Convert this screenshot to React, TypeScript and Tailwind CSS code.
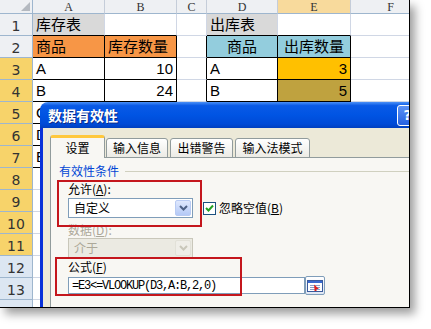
const COLS = ["A", "B", "C", "D", "E", "F"];
const ROWS = Array.from({ length: 14 }, (_, i) => i + 1);

type CellDef = { t?: string; bg?: string; align?: "left" | "right" | "center" };

const CELLS: Record<string, CellDef> = {
  A1: { t: "库存表", bg: "bg-[#d9d9d9]" },
  D1: { t: "出库表", bg: "bg-[#d9d9d9]" },
  A2: { t: "商品", bg: "bg-[#f79646]" },
  B2: { t: "库存数量", bg: "bg-[#f79646]" },
  D2: { t: "商品", bg: "bg-[#93cddd]", align: "center" },
  E2: { t: "出库数量", bg: "bg-[#93cddd]", align: "center" },
  A3: { t: "A" },
  B3: { t: "10", align: "right" },
  D3: { t: "A" },
  E3: { t: "3", align: "right", bg: "bg-[#ffc000]" },
  A4: { t: "B" },
  B4: { t: "24", align: "right" },
  D4: { t: "B" },
  E4: { t: "5", align: "right", bg: "bg-[#bfa23f]" },
  A5: { t: "C" },
  B5: { t: "18", align: "right" },
  A6: { t: "D" },
  B6: { t: "30", align: "right" },
  A7: { t: "E" },
  B7: { t: "12", align: "right" },
};

// black-bordered tables: A2:B7 and D2:E4
const inTable = (r: number, c: number) =>
  (c <= 1 && r >= 2 && r <= 7) || (c >= 3 && c <= 4 && r >= 2 && r <= 4);

function rowHeadBg(r: number) {
  if (r >= 3 && r <= 11) return "bg-[#f7d36a]";
  if (r >= 12) return "bg-[#dce6f2]";
  return "bg-[#eef0f3]";
}

function Sheet() {
  return (
    <div className="grid grid-cols-[33px_72px_72px_30px_71px_73px_80px] grid-rows-[14px_repeat(14,22px)]">
      {/* corner */}
      <div className="flex items-end justify-end border-r border-b border-[#9eb6ce] bg-[#eef0f3] p-[2px]">
        <svg width="9" height="9" viewBox="0 0 9 9">
          <path d="M9 0 L9 9 L0 9 Z" fill="#b4b9c0" />
        </svg>
      </div>
      {COLS.map((c) => (
        <div
          key={c}
          className={`flex items-center justify-center border-r border-b border-r-[#c5cdd9] border-b-[#9eb6ce] text-[12px] leading-none text-[#333] font-['Liberation_Serif',serif] ${
            c === "E" ? "bg-[#f8da9c]" : "bg-[#eef0f3]"
          }`}
        >
          {c}
        </div>
      ))}

      {ROWS.map((r) => (
        <Row key={r} r={r} />
      ))}
    </div>
  );
}

function Row({ r }: { r: number }) {
  return (
    <>
      <div
        className={`flex items-end justify-center pb-[1px] border-r border-b border-r-[#9eb6ce] border-b-[#9eb6ce] text-[14px] leading-[16px] text-[#333] font-['DejaVu_Sans',sans-serif] ${rowHeadBg(r)}`}
      >
        {r}
      </div>
      {COLS.map((col, c) => {
        const cell = CELLS[`${col}${r}`] ?? {};
        const right = inTable(r, c) || inTable(r, c + 1) ? "border-r-black" : "border-r-[#d0d7e5]";
        const bottom = inTable(r, c) || inTable(r + 1, c) ? "border-b-black" : "border-b-[#d0d7e5]";
        const align =
          cell.align === "right" ? "justify-end" : cell.align === "center" ? "justify-center" : "justify-start";
        return (
          <div
            key={col}
            className={`flex items-center overflow-hidden whitespace-nowrap px-[3px] border-r border-b text-[15px] leading-none text-black font-['Liberation_Sans','Noto_Sans_CJK_SC',sans-serif] ${right} ${bottom} ${align} ${
              cell.bg ?? "bg-white"
            }`}
          >
            {cell.t}
          </div>
        );
      })}
    </>
  );
}

function Chevron({ color }: { color: string }) {
  return (
    <svg width="9" height="6" viewBox="0 0 9 6">
      <path d="M1 1 L4.5 4.5 L8 1" fill="none" stroke={color} strokeWidth="2" />
    </svg>
  );
}

function Select({ value, disabled }: { value: string; disabled?: boolean }) {
  return (
    <div
      className={`flex h-[20px] w-[125px] items-center border ${
        disabled ? "border-[#c9c7ba] bg-[#ebeae2]" : "border-[#7f9db9] bg-white"
      }`}
    >
      <span className={`flex-1 pl-[5px] text-[12px] leading-none ${disabled ? "text-[#aca899]" : "text-black"}`}>
        {value}
      </span>
      <div
        className={`mr-px flex h-[16px] w-[16px] items-center justify-center rounded-[2px] border ${
          disabled
            ? "border-[#e2e1d8] bg-[#efeee8]"
            : "border-[#b9cbf3] bg-[linear-gradient(180deg,#dfe8fd,#b4c9f6)]"
        }`}
      >
        <Chevron color={disabled ? "#c9c7ba" : "#4d6185"} />
      </div>
    </div>
  );
}

function Dialog() {
  const tabs = [
    { t: "输入信息", w: "w-[62px]" },
    { t: "出错警告", w: "w-[63px]" },
    { t: "输入法模式", w: "w-[75px]" },
  ];
  return (
    <div className="absolute left-[40px] top-[102px] flex h-[230px] w-[406px] flex-col font-['Noto_Sans_CJK_SC',sans-serif]">
      {/* title bar */}
      <div className="flex h-[26px] items-center rounded-t-[8px] bg-[linear-gradient(180deg,#4a90f7_0%,#0a5ae6_14%,#0054e3_50%,#004ad6_85%,#003fbf_100%)] pl-[8px] pr-[5px]">
        <span className="text-[14px] font-bold leading-none text-white [text-shadow:1px_1px_0_#0b2c8a]">数据有效性</span>
        <div className="ml-auto flex items-center gap-[2px]">
          <div className="flex h-[21px] w-[21px] items-center justify-center rounded-[3px] border border-white bg-[linear-gradient(180deg,#5d93f5,#2561e0)] text-[14px] font-bold leading-none text-white font-['DejaVu_Sans',sans-serif]">
            ?
          </div>
          <div className="flex h-[21px] w-[21px] items-center justify-center rounded-[3px] border border-white bg-[#e25a36] text-[13px] font-bold leading-none text-white">
            ×
          </div>
        </div>
      </div>

      <div className="flex flex-1 flex-col border-l-[3px] border-[#0831d9] bg-[#ece9d8] pl-[7px] pt-[7px]">
        {/* tabs */}
        <div className="relative z-10 -mb-px flex items-end">
          <div className="flex h-[23px] w-[55px] items-center justify-center rounded-t-[3px] border border-b-0 border-[#919b9c] border-t-[3px] border-t-[#ffc83c] bg-[#f8f7f3] text-[12px] leading-none text-black">
            设置
          </div>
          {tabs.map((tab, i) => (
            <div
              key={tab.t}
              className={`flex h-[20px] items-center justify-center rounded-t-[3px] border border-[#919b9c] bg-[linear-gradient(180deg,#ffffff,#ecebe5)] text-[12px] leading-none text-black ${tab.w} ${
                i === 0 ? "ml-px" : "ml-[2px]"
              }`}
            >
              {tab.t}
            </div>
          ))}
        </div>

        {/* panel */}
        <div className="flex flex-1 flex-col border border-[#919b9c] bg-[#f8f7f3]">
          <div className="flex items-center pl-[8px] pt-[5px]">
            <span className="text-[12px] leading-[16px] text-[#0046d5]">有效性条件</span>
            <div className="ml-[6px] mr-[20px] h-px flex-1 bg-[#d0d0bf]" />
          </div>
          <div className="flex flex-col pl-[17px]">
            <span className="mt-[2px] text-[12px] leading-[16px] text-black">
              允许(<span className="underline">A</span>):
            </span>
            <div className="mt-px flex items-center">
              <Select value="自定义" />
              <div className="ml-[10px] flex h-[13px] w-[13px] items-center justify-center border border-[#1c5180] bg-white">
                <svg width="9" height="8" viewBox="0 0 9 8">
                  <path d="M1 4 L3.5 6.5 L8 1.5" fill="none" stroke="#21a121" strokeWidth="2" />
                </svg>
              </div>
              <span className="ml-[3px] text-[12px] leading-none text-black">
                忽略空值(<span className="underline">B</span>)
              </span>
            </div>
            <span className="mt-[4px] text-[12px] leading-[16px] text-[#aca899]">
              数据(<span className="underline">D</span>):
            </span>
            <Select value="介于" disabled />
            <span className="mt-px text-[12px] leading-[16px] text-black">
              公式(<span className="underline">F</span>)
            </span>
            <div className="mt-px flex items-center">
              <div className="flex h-[17px] w-[237px] items-center border border-[#7f9db9] bg-white pl-[3px]">
                <span className="whitespace-pre font-['Liberation_Mono',monospace] text-[12px] leading-none tracking-[-1.2px] text-black">
                  =E3&lt;=VLOOKUP(D3,A:B,2,0)
                </span>
              </div>
              <div className="flex h-[19px] w-[20px] items-center justify-center rounded-[2px] border border-[#7f9db9] bg-[linear-gradient(180deg,#ffffff,#dfe6f3)]">
                <svg width="16" height="12" viewBox="0 0 16 12">
                  <rect x="0.5" y="0.5" width="15" height="11" fill="#ffffff" stroke="#3a5a9c" />
                  <rect x="1" y="1" width="14" height="2" fill="#3a6ad0" />
                  <path d="M3 5.5 H13 M3 7.5 H13 M3 9.5 H13" stroke="#8aa0c8" />
                  <path d="M7 4.5 L12 9 L9.5 9 L9.5 11 L7.5 11 L7.5 9 Z" fill="#e0201c" />
                </svg>
              </div>
            </div>
          </div>
        </div>
      </div>
    </div>
  );
}

export default function App() {
  return (
    <div className="h-[329px] w-[431px] bg-white">
      <div className="relative h-[308px] w-[410px] overflow-hidden border-r border-b border-black bg-white shadow-[5px_6px_9px_rgba(0,0,0,0.38)]">
        <Sheet />
        <Dialog />
        {/* red annotation boxes */}
        <div className="absolute left-[57px] top-[180px] h-[47px] w-[145px] border-2 border-[#c4161c]" />
        <div className="absolute left-[55px] top-[257px] h-[39px] w-[187px] border-2 border-[#c4161c]" />
      </div>
    </div>
  );
}
